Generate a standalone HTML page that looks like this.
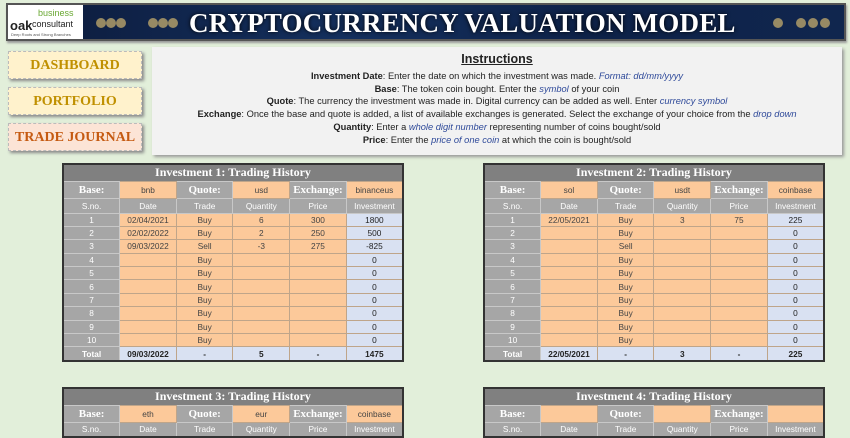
<!DOCTYPE html>
<html><head><meta charset="utf-8"><style>
*{margin:0;padding:0;box-sizing:border-box}
body{width:850px;height:429px;overflow:hidden;background:#e2efda;font-family:"Liberation Sans",sans-serif;position:relative}
.banner{position:absolute;left:6px;top:3px;width:840px;height:38px;border:2px solid #555;background:linear-gradient(90deg,#0c1a3a,#14305e 40%,#0e2248 70%,#10264e);box-shadow:1px 2px 2px #999}
.logo{position:absolute;left:0;top:0;width:75px;height:34px;background:#fff}
.logo .a{position:absolute;left:2px;top:13px;font:bold 13px "Liberation Sans";color:#222}
.logo .b{position:absolute;left:30px;top:3px;font:9px "Liberation Sans";color:#6aa833}
.logo .c{position:absolute;left:24px;top:14px;font:9px "Liberation Sans";color:#222}
.logo .d{position:absolute;left:3px;top:27px;font:4px "Liberation Sans";color:#555}
.title{position:absolute;left:181px;top:3px;font:bold 27px "Liberation Serif",serif;color:#fff;text-shadow:0 0 4px #000;letter-spacing:0.2px}
.coin{position:absolute;top:13px;width:10px;height:10px;border-radius:50%;background:#b9a46a;opacity:.8}
.btn{position:absolute;left:8px;width:134px;height:28px;border:1px dashed #bbb;box-shadow:2px 2px 3px #888;font:bold 14px "Liberation Serif",serif;text-align:center;line-height:27px;background:#fff2cc;color:#c09000}
.inst{position:absolute;left:152px;top:47px;width:690px;height:108px;background:#f2f2f2;box-shadow:2px 2px 3px #999;text-align:center;font-size:9.3px;color:#222;line-height:12.7px}
.inst h3{font-size:12.5px;text-decoration:underline;margin-top:5px;margin-bottom:4px;line-height:14px}
.inst i{color:#2f4a9a}
table{position:absolute;border-collapse:collapse;border:2px solid #333;width:342px;table-layout:fixed;font-size:8.3px;text-align:center}
td{border:1px solid #bfa58a;height:13.4px;padding:0;color:#444;overflow:hidden;white-space:nowrap}
td.g{background:#a6a6a6;color:#fff;border-color:#c8c8c8}
td.o{background:#fcc99a}
td.b{background:#d9e1f2;color:#222}
tr.t td{background:#808080;color:#fff;font:bold 12px "Liberation Serif",serif;height:17px;border:none}
tr.bs td{height:17px}
tr.bs td.g{font:bold 11px "Liberation Serif",serif}
tr.h td{height:15px}
tr.tot td{height:14px;font-weight:bold}
</style></head><body>
<div class="banner">
<div class="logo"><span class="b">business</span><span class="a">oak</span><span class="c">consultant</span><span class="d">Deep Roots and Strong Branches</span></div>
<div class="coin" style="left:88px"></div><div class="coin" style="left:98px"></div><div class="coin" style="left:108px"></div>
<div class="coin" style="left:140px"></div><div class="coin" style="left:150px"></div><div class="coin" style="left:160px"></div>
<div class="coin" style="left:765px"></div><div class="coin" style="left:788px"></div><div class="coin" style="left:800px"></div><div class="coin" style="left:812px"></div>
<div class="title">CRYPTOCURRENCY VALUATION MODEL</div>
</div>
<div class="btn" style="top:51px">DASHBOARD</div>
<div class="btn" style="top:87px">PORTFOLIO</div>
<div class="btn" style="top:123px;background:#fce4d6;color:#c55a11">TRADE JOURNAL</div>
<div class="inst"><h3>Instructions</h3>
<b>Investment Date</b>: Enter the date on which the investment was made. <i>Format: dd/mm/yyyy</i><br>
<b>Base</b>: The token coin bought. Enter the <i>symbol</i> of your coin<br>
<b>Quote</b>: The currency the investment was made in. Digital currency can be added as well. Enter <i>currency symbol</i><br>
<b>Exchange</b>: Once the base and quote is added, a list of available exchanges is generated. Select the exchange of your choice from the <i>drop down</i><br>
<b>Quantity</b>: Enter a <i>whole digit number</i> representing number of coins bought/sold<br>
<b>Price</b>: Enter the <i>price of one coin</i> at which the coin is bought/sold</div>

<table style="left:62px;top:163px">
<tr class="t"><td colspan="6">Investment 1: Trading History</td></tr>
<tr class="bs"><td class="g">Base:</td><td class="o">bnb</td><td class="g">Quote:</td><td class="o">usd</td><td class="g">Exchange:</td><td class="o">binanceus</td></tr>
<tr class="h"><td class="g">S.no.</td><td class="g">Date</td><td class="g">Trade</td><td class="g">Quantity</td><td class="g">Price</td><td class="g">Investment</td></tr>
<tr><td class="g">1</td><td class="o">02/04/2021</td><td class="o">Buy</td><td class="o">6</td><td class="o">300</td><td class="b">1800</td></tr>
<tr><td class="g">2</td><td class="o">02/02/2022</td><td class="o">Buy</td><td class="o">2</td><td class="o">250</td><td class="b">500</td></tr>
<tr><td class="g">3</td><td class="o">09/03/2022</td><td class="o">Sell</td><td class="o">-3</td><td class="o">275</td><td class="b">-825</td></tr>
<tr><td class="g">4</td><td class="o"></td><td class="o">Buy</td><td class="o"></td><td class="o"></td><td class="b">0</td></tr>
<tr><td class="g">5</td><td class="o"></td><td class="o">Buy</td><td class="o"></td><td class="o"></td><td class="b">0</td></tr>
<tr><td class="g">6</td><td class="o"></td><td class="o">Buy</td><td class="o"></td><td class="o"></td><td class="b">0</td></tr>
<tr><td class="g">7</td><td class="o"></td><td class="o">Buy</td><td class="o"></td><td class="o"></td><td class="b">0</td></tr>
<tr><td class="g">8</td><td class="o"></td><td class="o">Buy</td><td class="o"></td><td class="o"></td><td class="b">0</td></tr>
<tr><td class="g">9</td><td class="o"></td><td class="o">Buy</td><td class="o"></td><td class="o"></td><td class="b">0</td></tr>
<tr><td class="g">10</td><td class="o"></td><td class="o">Buy</td><td class="o"></td><td class="o"></td><td class="b">0</td></tr>
<tr class="tot"><td class="g">Total</td><td class="b">09/03/2022</td><td class="b">-</td><td class="b">5</td><td class="b">-</td><td class="b">1475</td></tr>
</table>

<table style="left:483px;top:163px">
<tr class="t"><td colspan="6">Investment 2: Trading History</td></tr>
<tr class="bs"><td class="g">Base:</td><td class="o">sol</td><td class="g">Quote:</td><td class="o">usdt</td><td class="g">Exchange:</td><td class="o">coinbase</td></tr>
<tr class="h"><td class="g">S.no.</td><td class="g">Date</td><td class="g">Trade</td><td class="g">Quantity</td><td class="g">Price</td><td class="g">Investment</td></tr>
<tr><td class="g">1</td><td class="o">22/05/2021</td><td class="o">Buy</td><td class="o">3</td><td class="o">75</td><td class="b">225</td></tr>
<tr><td class="g">2</td><td class="o"></td><td class="o">Buy</td><td class="o"></td><td class="o"></td><td class="b">0</td></tr>
<tr><td class="g">3</td><td class="o"></td><td class="o">Sell</td><td class="o"></td><td class="o"></td><td class="b">0</td></tr>
<tr><td class="g">4</td><td class="o"></td><td class="o">Buy</td><td class="o"></td><td class="o"></td><td class="b">0</td></tr>
<tr><td class="g">5</td><td class="o"></td><td class="o">Buy</td><td class="o"></td><td class="o"></td><td class="b">0</td></tr>
<tr><td class="g">6</td><td class="o"></td><td class="o">Buy</td><td class="o"></td><td class="o"></td><td class="b">0</td></tr>
<tr><td class="g">7</td><td class="o"></td><td class="o">Buy</td><td class="o"></td><td class="o"></td><td class="b">0</td></tr>
<tr><td class="g">8</td><td class="o"></td><td class="o">Buy</td><td class="o"></td><td class="o"></td><td class="b">0</td></tr>
<tr><td class="g">9</td><td class="o"></td><td class="o">Buy</td><td class="o"></td><td class="o"></td><td class="b">0</td></tr>
<tr><td class="g">10</td><td class="o"></td><td class="o">Buy</td><td class="o"></td><td class="o"></td><td class="b">0</td></tr>
<tr class="tot"><td class="g">Total</td><td class="b">22/05/2021</td><td class="b">-</td><td class="b">3</td><td class="b">-</td><td class="b">225</td></tr>
</table>

<table style="left:62px;top:387px">
<tr class="t"><td colspan="6">Investment 3: Trading History</td></tr>
<tr class="bs"><td class="g">Base:</td><td class="o">eth</td><td class="g">Quote:</td><td class="o">eur</td><td class="g">Exchange:</td><td class="o">coinbase</td></tr>
<tr class="h"><td class="g">S.no.</td><td class="g">Date</td><td class="g">Trade</td><td class="g">Quantity</td><td class="g">Price</td><td class="g">Investment</td></tr>
</table>

<table style="left:483px;top:387px">
<tr class="t"><td colspan="6">Investment 4: Trading History</td></tr>
<tr class="bs"><td class="g">Base:</td><td class="o"></td><td class="g">Quote:</td><td class="o"></td><td class="g">Exchange:</td><td class="o"></td></tr>
<tr class="h"><td class="g">S.no.</td><td class="g">Date</td><td class="g">Trade</td><td class="g">Quantity</td><td class="g">Price</td><td class="g">Investment</td></tr>
</table>
</body></html>
